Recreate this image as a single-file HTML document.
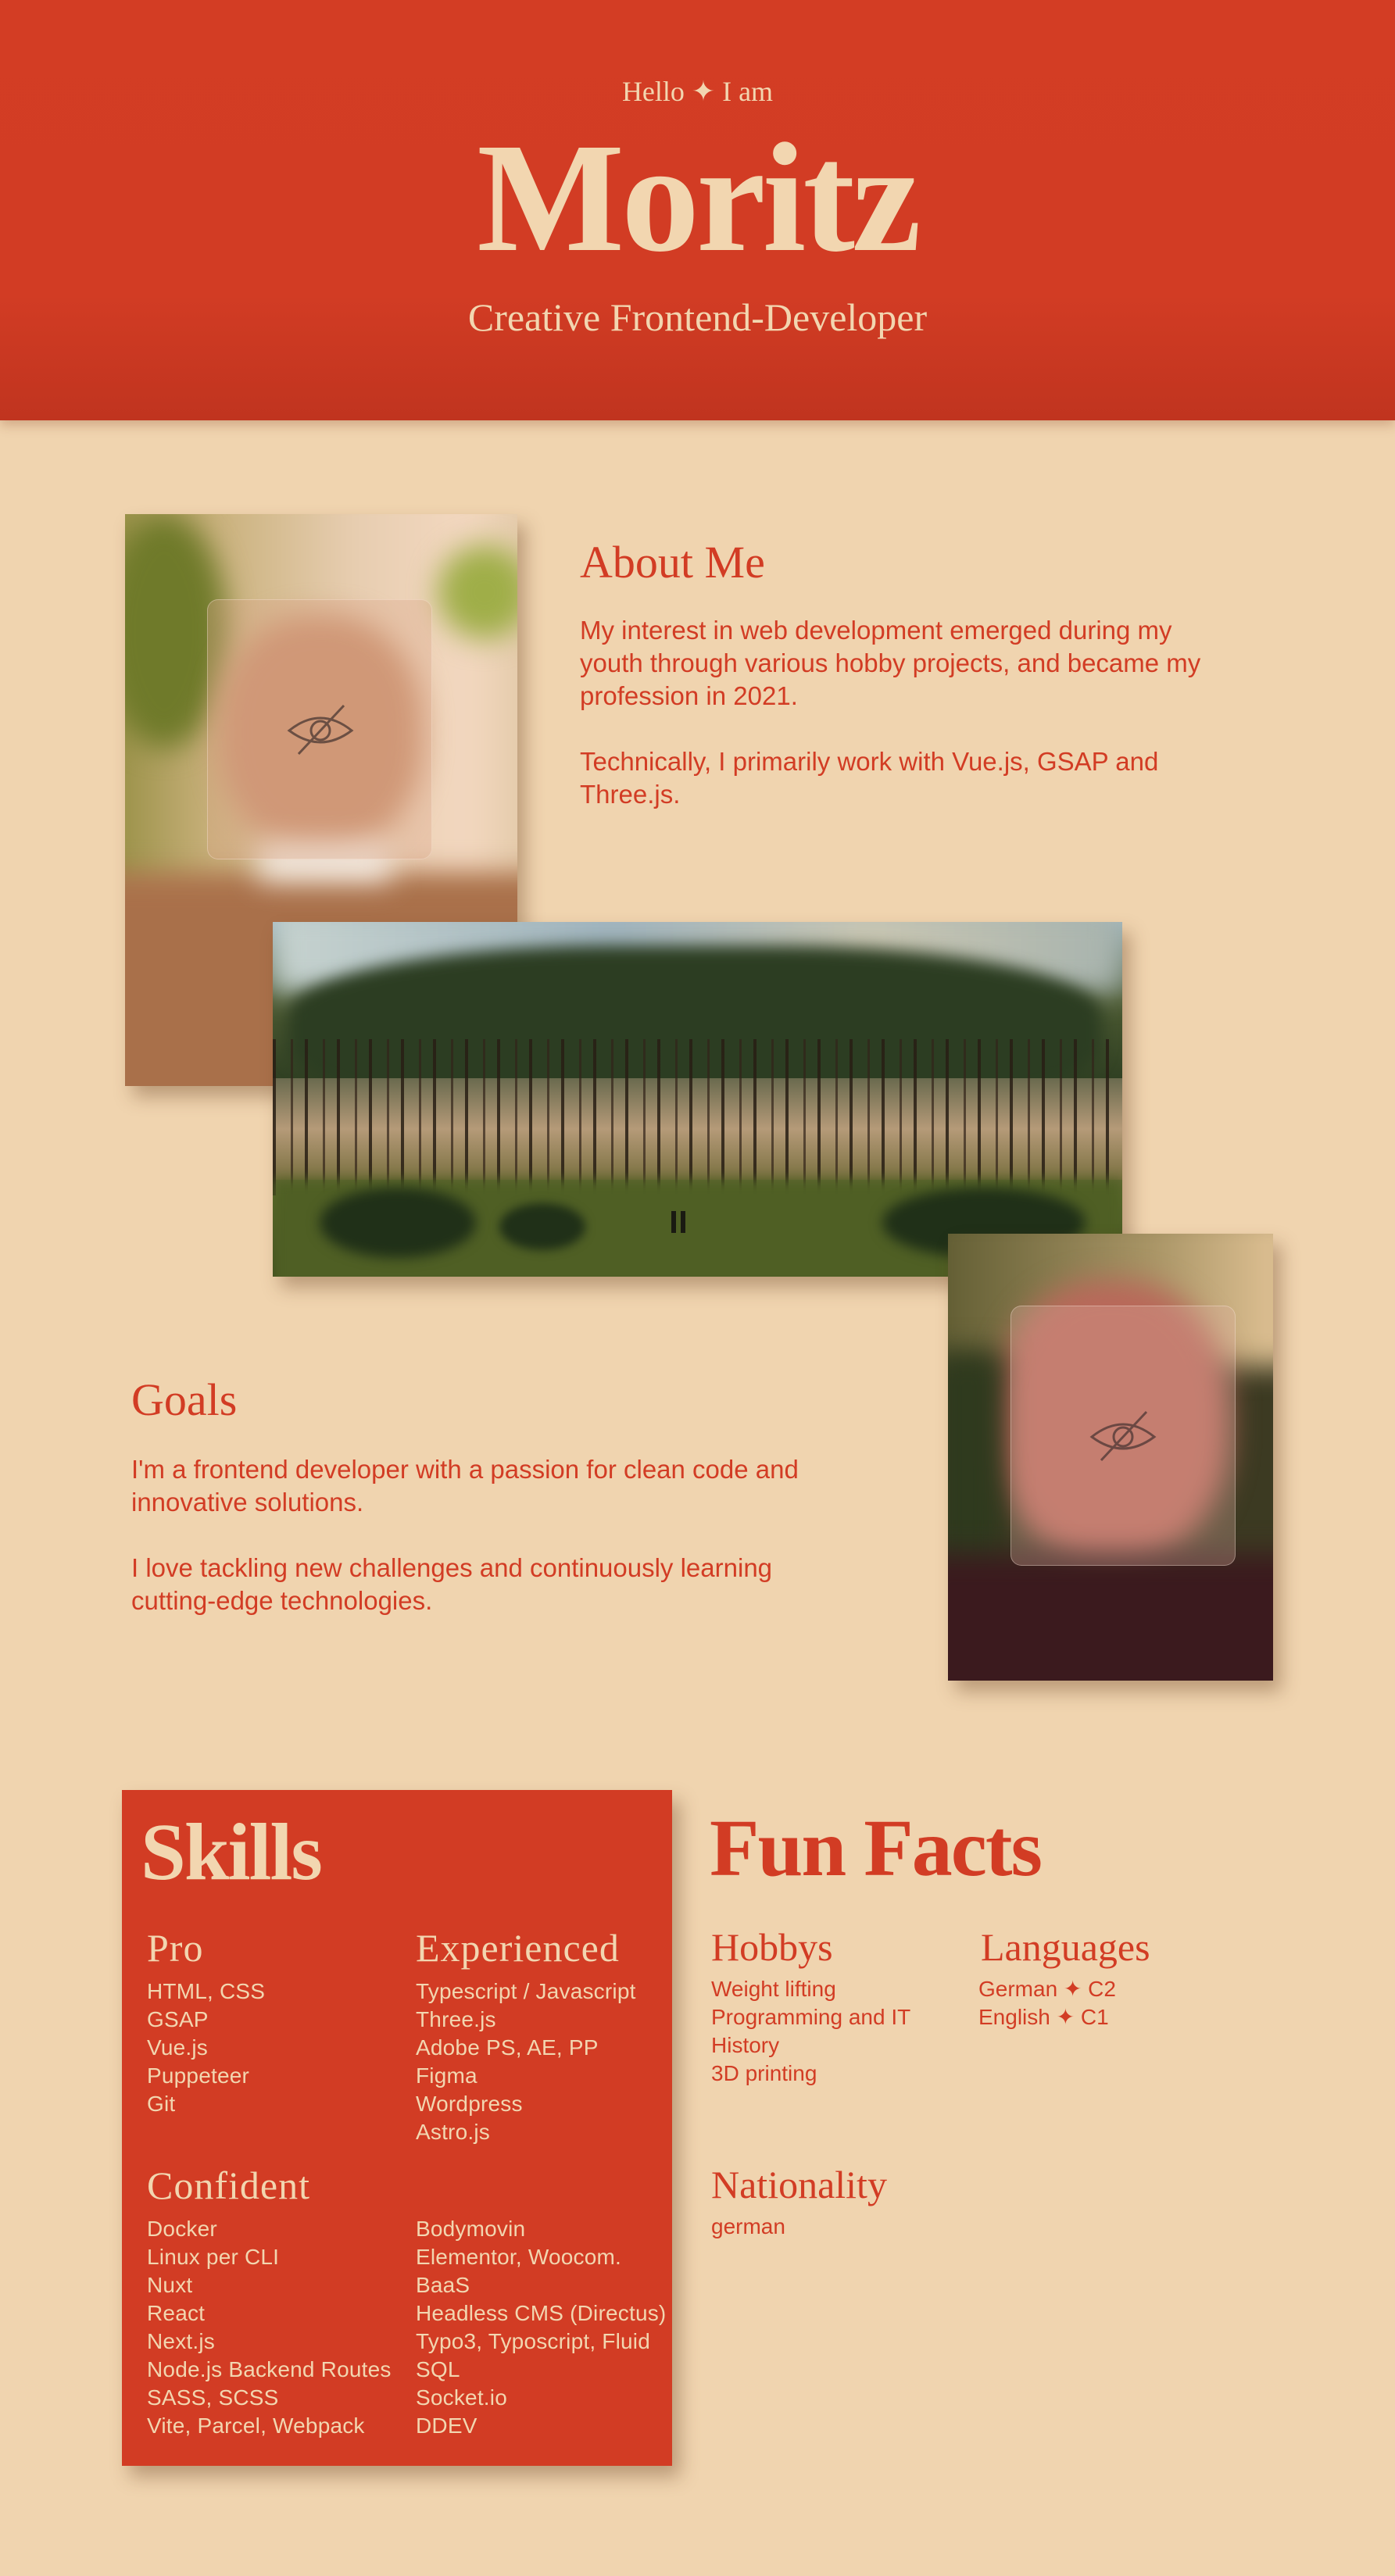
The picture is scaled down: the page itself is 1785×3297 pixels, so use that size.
<!DOCTYPE html>
<html><head><meta charset="utf-8"><style>
*{margin:0;padding:0;box-sizing:border-box}
body{width:1785px;height:3297px;background:#F0D4AF;position:relative;overflow:hidden;font-family:"Liberation Sans",sans-serif;color:#D23C24}
.a{position:absolute;white-space:nowrap}
.serif{font-family:"Liberation Serif",serif}
#hdr{position:absolute;left:0;top:0;width:1785px;height:538px;background:linear-gradient(#D33D24 0%,#D23C24 70%,#C0341F 100%);box-shadow:0 6px 14px rgba(120,40,10,.25)}
.cream{color:#F2D6B0}
.img{position:absolute;overflow:hidden;box-shadow:10px 14px 22px rgba(90,50,20,.35)}
.blur{position:absolute;filter:blur(18px)}
.frost{position:absolute;border-radius:14px;background:rgba(225,200,185,.35);box-shadow:0 0 0 1px rgba(255,240,230,.35) inset}
.p{font-size:33px;line-height:42px}
.h2{font-size:58px;line-height:64px}
.li{font-size:28px;line-height:36px;letter-spacing:.2px}
.h3{font-size:50px;line-height:56px;letter-spacing:1px}
</style></head><body>
<div id="hdr"></div>
<div class="a serif cream" style="left:0;width:1785px;text-align:center;top:97px;font-size:36px;line-height:40px">Hello ✦ I am</div>
<div class="a serif cream" style="left:0;width:1785px;text-align:center;top:154px;font-size:200px;line-height:200px;font-weight:bold;letter-spacing:-4px">Moritz</div>
<div class="a serif cream" style="left:0;width:1785px;text-align:center;top:376px;font-size:50px;line-height:60px">Creative Frontend-Developer</div>

<!-- photo 1 -->
<div class="img" style="left:160px;top:658px;width:502px;height:732px;background:#c79a6c">
 <div class="blur" style="left:-40px;top:-40px;width:600px;height:520px;background:linear-gradient(90deg,#8f8a3c 0%,#c8b07a 25%,#e7cdb0 55%,#f3d8c0 80%,#d9c19a 100%)"></div>
 <div class="blur" style="left:-30px;top:0;width:160px;height:300px;background:#6f7a2a;border-radius:50%"></div>
 <div class="blur" style="left:400px;top:40px;width:120px;height:120px;background:#9fae48;border-radius:50%"></div>
 <div class="blur" style="left:120px;top:130px;width:260px;height:300px;background:#c98f6c;border-radius:45%"></div>
 <div class="blur" style="left:-40px;top:460px;width:600px;height:330px;background:#a9704a"></div>
 <div class="blur" style="left:170px;top:420px;width:170px;height:50px;background:#f1e6dc"></div>
 <div class="frost" style="left:105px;top:109px;width:288px;height:333px;background:rgba(220,170,140,.35)"></div>
 <svg style="position:absolute;left:200px;top:235px" width="100" height="80" viewBox="0 0 100 80"><g fill="none" stroke="#6b4f43" stroke-width="3"><path d="M10 42 Q50 10 90 42 Q50 72 10 42Z"/><circle cx="50" cy="42" r="12"/><path d="M80 10 L22 72"/></g></svg>
</div>
<div class="a serif h2" style="left:742px;top:688px">About Me</div>
<div class="a p" style="left:742px;top:786px">My interest in web development emerged during my<br>youth through various hobby projects, and became my<br>profession in 2021.<br><br>Technically, I primarily work with Vue.js, GSAP and<br>Three.js.</div>

<!-- forest -->
<div class="img" style="left:349px;top:1180px;width:1087px;height:454px;background:linear-gradient(#9fb6bf 0%,#4c5a32 22%,#2f3f22 45%,#7c6a4a 62%,#5a6a2c 78%,#3d4a1e 100%)">
 <div class="blur" style="left:0;top:-20px;width:1087px;height:110px;background:linear-gradient(90deg,#c7d3cf,#9fb3bd 40%,#c9c6b2 70%,#a7b3ae)"></div>
 <div class="blur" style="left:20px;top:30px;width:1040px;height:220px;background:#2c3d22;border-radius:40%;filter:blur(10px)"></div>
 <div style="position:absolute;left:0;top:200px;width:1087px;height:130px;background:linear-gradient(#6a6a4e,#b59a78 50%,#7a7040)"></div>
 <div style="position:absolute;left:0;top:150px;width:1087px;height:200px;background:repeating-linear-gradient(90deg,rgba(40,30,20,.85) 0 4px,transparent 4px 23px,rgba(50,35,25,.7) 23px 26px,transparent 26px 41px)"></div>
 <div class="blur" style="left:0;top:330px;width:1087px;height:140px;background:#4f5f24;filter:blur(8px)"></div>
 <div class="blur" style="left:60px;top:340px;width:200px;height:90px;background:#203018;border-radius:50%;filter:blur(8px)"></div>
 <div class="blur" style="left:290px;top:360px;width:110px;height:60px;background:#203018;border-radius:50%;filter:blur(6px)"></div>
 <div class="blur" style="left:780px;top:340px;width:260px;height:90px;background:#203018;border-radius:50%;filter:blur(8px)"></div>
 <div style="position:absolute;left:510px;top:370px;width:6px;height:28px;background:#1a1a12"></div>
 <div style="position:absolute;left:522px;top:370px;width:6px;height:28px;background:#1a1a12"></div>
</div>

<!-- photo 2 -->
<div class="img" style="left:1213px;top:1579px;width:416px;height:572px;background:#3c3a22">
 <div class="blur" style="left:-30px;top:-30px;width:480px;height:200px;background:linear-gradient(90deg,#5d5a30,#a89465 60%,#e7c79a)"></div>
 <div class="blur" style="left:60px;top:60px;width:300px;height:360px;background:#b9685a;border-radius:45%"></div>
 <div class="blur" style="left:-20px;top:150px;width:90px;height:300px;background:#2f3a1e"></div>
 <div class="blur" style="left:-40px;top:410px;width:500px;height:200px;background:#3b1a1e"></div>
 <div class="frost" style="left:80px;top:92px;width:288px;height:333px;background:rgba(225,180,165,.3)"></div>
 <svg style="position:absolute;left:174px;top:218px" width="100" height="80" viewBox="0 0 100 80"><g fill="none" stroke="#6b4843" stroke-width="3"><path d="M10 42 Q50 10 90 42 Q50 72 10 42Z"/><circle cx="50" cy="42" r="12"/><path d="M80 10 L22 72"/></g></svg>
</div>
<div class="a serif h2" style="left:168px;top:1760px">Goals</div>
<div class="a p" style="left:168px;top:1860px">I'm a frontend developer with a passion for clean code and<br>innovative solutions.<br><br>I love tackling new challenges and continuously learning<br>cutting-edge technologies.</div>

<!-- skills -->
<div style="position:absolute;left:156px;top:2291px;width:704px;height:865px;background:#D23C24;box-shadow:10px 14px 22px rgba(90,50,20,.35)"></div>
<div class="a serif cream" style="left:180px;top:2316px;font-size:104px;line-height:110px;font-weight:bold;letter-spacing:-2px">Skills</div>
<div class="a serif cream h3" style="left:188px;top:2465px">Pro</div>
<div class="a serif cream h3" style="left:532px;top:2465px">Experienced</div>
<div class="a cream li" style="left:188px;top:2531px">HTML, CSS<br>GSAP<br>Vue.js<br>Puppeteer<br>Git</div>
<div class="a cream li" style="left:532px;top:2531px">Typescript / Javascript<br>Three.js<br>Adobe PS, AE, PP<br>Figma<br>Wordpress<br>Astro.js</div>
<div class="a serif cream h3" style="left:188px;top:2769px">Confident</div>
<div class="a cream li" style="left:188px;top:2835px">Docker<br>Linux per CLI<br>Nuxt<br>React<br>Next.js<br>Node.js Backend Routes<br>SASS, SCSS<br>Vite, Parcel, Webpack</div>
<div class="a cream li" style="left:532px;top:2835px">Bodymovin<br>Elementor, Woocom.<br>BaaS<br>Headless CMS (Directus)<br>Typo3, Typoscript, Fluid<br>SQL<br>Socket.io<br>DDEV</div>

<!-- fun facts -->
<div class="a serif" style="left:908px;top:2311px;font-size:104px;line-height:110px;font-weight:bold;letter-spacing:-2px">Fun Facts</div>
<div class="a serif h3" style="left:910px;top:2464px;letter-spacing:0">Hobbys</div>
<div class="a serif h3" style="left:1255px;top:2464px;letter-spacing:0">Languages</div>
<div class="a li" style="left:910px;top:2528px;letter-spacing:0;font-size:28px">Weight lifting<br>Programming and IT<br>History<br>3D printing</div>
<div class="a li" style="left:1252px;top:2528px;letter-spacing:0;font-size:28px">German ✦ C2<br>English ✦ C1</div>
<div class="a serif h3" style="left:910px;top:2768px;letter-spacing:0">Nationality</div>
<div class="a li" style="left:910px;top:2832px;letter-spacing:0;font-size:28px">german</div>
</body></html>
